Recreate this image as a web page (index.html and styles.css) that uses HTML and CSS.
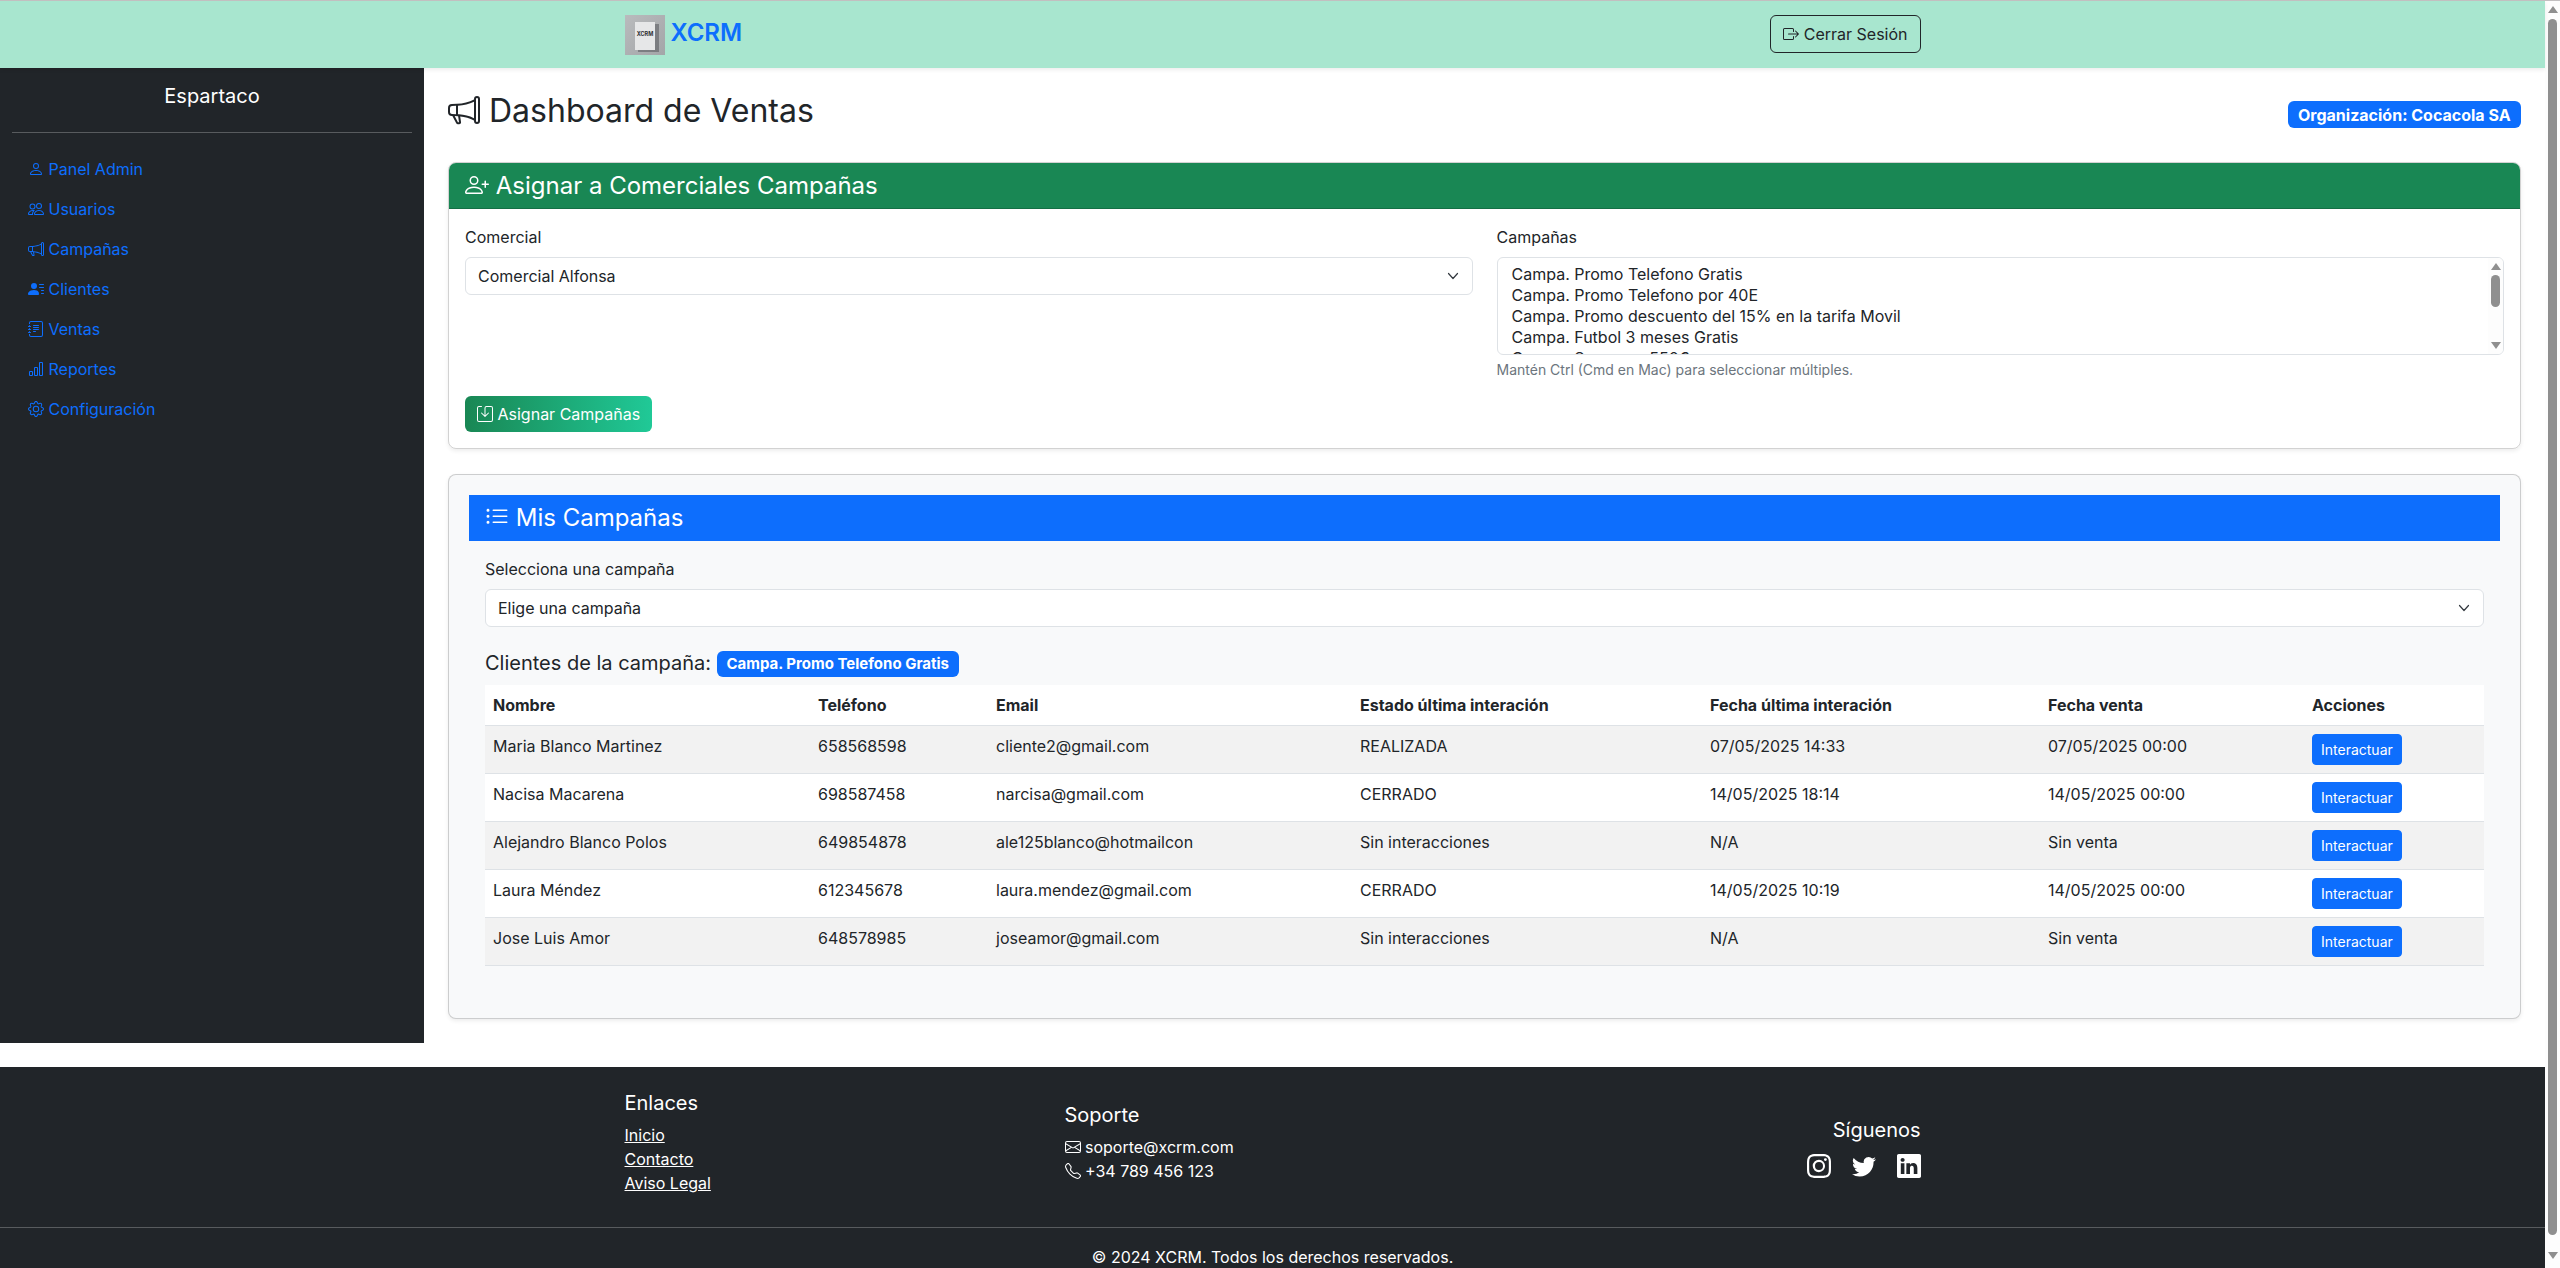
FILE: index.html
```html
<!DOCTYPE html>
<html lang="es">
<head>
    <meta charset="UTF-8">
    <meta name="viewport" content="width=device-width, initial-scale=1.0">
    <title>XCRM - Dashboard de Ventas</title>
    <link rel="stylesheet" href="styles.css">
</head>
<body>
    <svg class="icon-defs" xmlns="http://www.w3.org/2000/svg">
        <symbol id="i-person" viewBox="0 0 16 16"><path d="M8 8a3 3 0 1 0 0-6 3 3 0 0 0 0 6Zm2-3a2 2 0 1 1-4 0 2 2 0 0 1 4 0Zm4 8c0 1-1 1-1 1H3s-1 0-1-1 1-4 6-4 6 3 6 4Zm-1-.004c-.001-.246-.154-.986-.832-1.664C11.516 10.68 10.289 10 8 10c-2.29 0-3.516.68-4.168 1.332-.678.678-.83 1.418-.832 1.664h10Z"/></symbol>
        <symbol id="i-people" viewBox="0 0 16 16"><path d="M15 14s1 0 1-1-1-4-5-4-5 3-5 4 1 1 1 1h8Zm-7.978-1A.261.261 0 0 1 7 12.996c.001-.264.167-1.03.76-1.72C8.312 10.629 9.282 10 11 10c1.717 0 2.687.63 3.24 1.276.593.69.758 1.457.76 1.72l-.008.002a.274.274 0 0 1-.014.002H7.022ZM11 7a2 2 0 1 0 0-4 2 2 0 0 0 0 4Zm3-2a3 3 0 1 1-6 0 3 3 0 0 1 6 0ZM6.936 9.28a5.88 5.88 0 0 0-1.23-.247A7.35 7.35 0 0 0 5 9c-4 0-5 3-5 4 0 .667.333 1 1 1h4.216A2.238 2.238 0 0 1 5 13c0-1.01.377-2.042 1.09-2.904.243-.294.526-.569.846-.816ZM4.92 10A5.493 5.493 0 0 0 4 13H1c0-.26.164-1.03.76-1.724.545-.636 1.492-1.256 3.16-1.275ZM1.5 5.5a3 3 0 1 1 6 0 3 3 0 0 1-6 0Zm3-2a2 2 0 1 0 0 4 2 2 0 0 0 0-4Z"/></symbol>
        <symbol id="i-megaphone" viewBox="0 0 16 16"><path d="M13 2.5a1.5 1.5 0 0 1 3 0v11a1.5 1.5 0 0 1-3 0v-.214c-2.162-1.241-4.49-1.843-6.912-2.083l.405 2.712A1 1 0 0 1 5.51 15.1h-.548a1 1 0 0 1-.916-.599l-1.85-3.49a68.14 68.14 0 0 0-.202-.003A2.014 2.014 0 0 1 0 9V7a2.02 2.02 0 0 1 1.992-2.013 74.663 74.663 0 0 0 2.483-.075c3.043-.154 6.148-.849 8.525-2.199V2.5zm1 0v11a.5.5 0 0 0 1 0v-11a.5.5 0 0 0-1 0zm-1 1.35c-2.344 1.205-5.209 1.842-8 2.033v4.233c.18.01.359.022.537.036 2.568.189 5.093.744 7.463 1.993V3.85zm-9 6.215v-4.13a95.09 95.09 0 0 1-1.992.052A1.02 1.02 0 0 0 1 7v2c0 .55.448 1.002 1.006 1.009A60.49 60.49 0 0 1 4 10.065zm-.657.975 1.609 3.037.01.024h.548l-.002-.014-.443-2.966a68.019 68.019 0 0 0-1.722-.082z"/></symbol>
        <symbol id="i-person-lines" viewBox="0 0 16 16"><path d="M6 8a3 3 0 1 0 0-6 3 3 0 0 0 0 6zm-5 6s-1 0-1-1 1-4 6-4 5 3 5 4-1 1-1 1H1zM11 3.5a.5.5 0 0 1 .5-.5h4a.5.5 0 0 1 0 1h-4a.5.5 0 0 1-.5-.5zm.5 2.5a.5.5 0 0 0 0 1h4a.5.5 0 0 0 0-1h-4zm2 3a.5.5 0 0 0 0 1h2a.5.5 0 0 0 0-1h-2zm0 3a.5.5 0 0 0 0 1h2a.5.5 0 0 0 0-1h-2z"/></symbol>
        <symbol id="i-journal" viewBox="0 0 16 16"><path d="M5 10.5a.5.5 0 0 1 .5-.5h2a.5.5 0 0 1 0 1h-2a.5.5 0 0 1-.5-.5zm0-2a.5.5 0 0 1 .5-.5h5a.5.5 0 0 1 0 1h-5a.5.5 0 0 1-.5-.5zm0-2a.5.5 0 0 1 .5-.5h5a.5.5 0 0 1 0 1h-5a.5.5 0 0 1-.5-.5zm0-2a.5.5 0 0 1 .5-.5h5a.5.5 0 0 1 0 1h-5a.5.5 0 0 1-.5-.5z"/><path d="M3 0h10a2 2 0 0 1 2 2v12a2 2 0 0 1-2 2H3a2 2 0 0 1-2-2v-1h1v1a1 1 0 0 0 1 1h10a1 1 0 0 0 1-1V2a1 1 0 0 0-1-1H3a1 1 0 0 0-1 1v1H1V2a2 2 0 0 1 2-2z"/><path d="M1 5v-.5a.5.5 0 0 1 1 0V5h.5a.5.5 0 0 1 0 1h-2a.5.5 0 0 1 0-1H1zm0 3v-.5a.5.5 0 0 1 1 0V8h.5a.5.5 0 0 1 0 1h-2a.5.5 0 0 1 0-1H1zm0 3v-.5a.5.5 0 0 1 1 0v.5h.5a.5.5 0 0 1 0 1h-2a.5.5 0 0 1 0-1H1z"/></symbol>
        <symbol id="i-bar-chart" viewBox="0 0 16 16"><path d="M4 11H2v3h2v-3zm5-4H7v7h2V7zm5-5v12h-2V2h2zm-2-1a1 1 0 0 0-1 1v12a1 1 0 0 0 1 1h2a1 1 0 0 0 1-1V2a1 1 0 0 0-1-1h-2zM6 7a1 1 0 0 1 1-1h2a1 1 0 0 1 1 1v7a1 1 0 0 1-1 1H7a1 1 0 0 1-1-1V7zm-5 4a1 1 0 0 1 1-1h2a1 1 0 0 1 1 1v3a1 1 0 0 1-1 1H2a1 1 0 0 1-1-1v-3z"/></symbol>
        <symbol id="i-gear" viewBox="0 0 16 16"><path d="M8 4.754a3.246 3.246 0 1 0 0 6.492 3.246 3.246 0 0 0 0-6.492zM5.754 8a2.246 2.246 0 1 1 4.492 0 2.246 2.246 0 0 1-4.492 0z"/><path d="M9.796 1.343c-.527-1.79-3.065-1.79-3.592 0l-.094.319a.873.873 0 0 1-1.255.52l-.292-.16c-1.64-.892-3.433.902-2.54 2.541l.159.292a.873.873 0 0 1-.52 1.255l-.319.094c-1.79.527-1.79 3.065 0 3.592l.319.094a.873.873 0 0 1 .52 1.255l-.16.292c-.892 1.64.901 3.434 2.541 2.54l.292-.159a.873.873 0 0 1 1.255.52l.094.319c.527 1.79 3.065 1.79 3.592 0l.094-.319a.873.873 0 0 1 1.255-.52l.292.16c1.64.893 3.434-.902 2.54-2.541l-.159-.292a.873.873 0 0 1 .52-1.255l.319-.094c1.79-.527 1.79-3.065 0-3.592l-.319-.094a.873.873 0 0 1-.52-1.255l.16-.292c.893-1.64-.902-3.433-2.541-2.54l-.292.159a.873.873 0 0 1-1.255-.52l-.094-.319zm-2.633.283c.246-.835 1.428-.835 1.674 0l.094.319a1.873 1.873 0 0 0 2.693 1.115l.291-.16c.764-.415 1.6.42 1.184 1.185l-.159.292a1.873 1.873 0 0 0 1.116 2.692l.318.094c.835.246.835 1.428 0 1.674l-.319.094a1.873 1.873 0 0 0-1.115 2.693l.16.291c.415.764-.42 1.6-1.185 1.184l-.291-.159a1.873 1.873 0 0 0-2.693 1.116l-.094.318c-.246.835-1.428.835-1.674 0l-.094-.319a1.873 1.873 0 0 0-2.692-1.115l-.292.16c-.764.415-1.6-.42-1.184-1.185l.159-.291A1.873 1.873 0 0 0 1.945 8.93l-.319-.094c-.835-.246-.835-1.428 0-1.674l.319-.094A1.873 1.873 0 0 0 3.06 4.377l-.16-.292c-.415-.764.42-1.6 1.185-1.184l.292.159a1.873 1.873 0 0 0 2.692-1.115l.094-.319z"/></symbol>
        <symbol id="i-person-plus" viewBox="0 0 16 16"><path d="M6 8a3 3 0 1 0 0-6 3 3 0 0 0 0 6zm2-3a2 2 0 1 1-4 0 2 2 0 0 1 4 0zm4 8c0 1-1 1-1 1H1s-1 0-1-1 1-4 6-4 6 3 6 4zm-1-.004c-.001-.246-.154-.986-.832-1.664C9.516 10.68 8.289 10 6 10c-2.29 0-3.516.68-4.168 1.332-.678.678-.83 1.418-.832 1.664h10z"/><path d="M13.5 5a.5.5 0 0 1 .5.5V7h1.5a.5.5 0 0 1 0 1H14v1.5a.5.5 0 0 1-1 0V8h-1.5a.5.5 0 0 1 0-1H13V5.5a.5.5 0 0 1 .5-.5z"/></symbol>
        <symbol id="i-save" viewBox="0 0 16 16"><path d="M2 1a1 1 0 0 0-1 1v12a1 1 0 0 0 1 1h12a1 1 0 0 0 1-1V2a1 1 0 0 0-1-1H9.5a1 1 0 0 0-1 1v7.293l2.646-2.647a.5.5 0 0 1 .708.708l-3.5 3.5a.5.5 0 0 1-.708 0l-3.5-3.5a.5.5 0 1 1 .708-.708L7.5 9.293V2a2 2 0 0 1 2-2H14a2 2 0 0 1 2 2v12a2 2 0 0 1-2 2H2a2 2 0 0 1-2-2V2a2 2 0 0 1 2-2h2.5a.5.5 0 0 1 0 1H2z"/></symbol>
        <symbol id="i-list" viewBox="0 0 16 16"><path d="M5 11.5a.5.5 0 0 1 .5-.5h9a.5.5 0 0 1 0 1h-9a.5.5 0 0 1-.5-.5zm0-4a.5.5 0 0 1 .5-.5h9a.5.5 0 0 1 0 1h-9a.5.5 0 0 1-.5-.5zm0-4a.5.5 0 0 1 .5-.5h9a.5.5 0 0 1 0 1h-9a.5.5 0 0 1-.5-.5zm-3 1a1 1 0 1 0 0-2 1 1 0 0 0 0 2zm0 4a1 1 0 1 0 0-2 1 1 0 0 0 0 2zm0 4a1 1 0 1 0 0-2 1 1 0 0 0 0 2z"/></symbol>
        <symbol id="i-logout" viewBox="0 0 16 16"><path d="M10 12.5a.5.5 0 0 1-.5.5h-8a.5.5 0 0 1-.5-.5v-9a.5.5 0 0 1 .5-.5h8a.5.5 0 0 1 .5.5v2a.5.5 0 0 0 1 0v-2A1.5 1.5 0 0 0 9.5 2h-8A1.5 1.5 0 0 0 0 3.5v9A1.5 1.5 0 0 0 1.5 14h8a1.5 1.5 0 0 0 1.5-1.5v-2a.5.5 0 0 0-1 0v2z"/><path d="M15.854 8.354a.5.5 0 0 0 0-.708l-3-3a.5.5 0 0 0-.708.708L14.293 7.5H5.5a.5.5 0 0 0 0 1h8.793l-2.147 2.146a.5.5 0 0 0 .708.708l3-3z"/></symbol>
        <symbol id="i-envelope" viewBox="0 0 16 16"><path d="M0 4a2 2 0 0 1 2-2h12a2 2 0 0 1 2 2v8a2 2 0 0 1-2 2H2a2 2 0 0 1-2-2V4Zm2-1a1 1 0 0 0-1 1v.217l7 4.2 7-4.2V4a1 1 0 0 0-1-1H2Zm13 2.383-4.708 2.825L15 11.105V5.383Zm-.034 6.876-5.64-3.471L8 9.583l-1.326-.795-5.64 3.47A1 1 0 0 0 2 13h12a1 1 0 0 0 .966-.741ZM1 11.105l4.708-2.897L1 5.383v5.722Z"/></symbol>
        <symbol id="i-phone" viewBox="0 0 16 16"><path d="M3.654 1.328a.678.678 0 0 0-1.015-.063L1.605 2.3c-.483.484-.661 1.169-.45 1.77a17.568 17.568 0 0 0 4.168 6.608 17.569 17.569 0 0 0 6.608 4.168c.601.211 1.286.033 1.77-.45l1.034-1.034a.678.678 0 0 0-.063-1.015l-2.307-1.794a.678.678 0 0 0-.58-.122l-2.19.547a1.745 1.745 0 0 1-1.657-.459L5.482 8.062a1.745 1.745 0 0 1-.46-1.657l.548-2.19a.678.678 0 0 0-.122-.58L3.654 1.328zM1.884.511a1.745 1.745 0 0 1 2.612.163L6.29 2.98c.329.423.445.974.315 1.494l-.547 2.19a.678.678 0 0 0 .178.643l2.457 2.457a.678.678 0 0 0 .644.178l2.189-.547a1.745 1.745 0 0 1 1.494.315l2.306 1.794c.829.645.905 1.87.163 2.611l-1.034 1.034c-.74.74-1.846 1.065-2.877.702a18.634 18.634 0 0 1-7.01-4.42 18.634 18.634 0 0 1-4.42-7.009c-.362-1.03-.037-2.137.703-2.877L1.885.511z"/></symbol>
        <symbol id="i-instagram" viewBox="0 0 16 16"><path d="M8 0C5.829 0 5.556.01 4.703.048 3.85.088 3.269.222 2.76.42a3.917 3.917 0 0 0-1.417.923A3.927 3.927 0 0 0 .42 2.76C.222 3.268.087 3.85.048 4.7.01 5.555 0 5.827 0 8.001c0 2.172.01 2.444.048 3.297.04.852.174 1.433.372 1.942.205.526.478.972.923 1.417.444.445.89.719 1.416.923.51.198 1.09.333 1.942.372C5.555 15.99 5.827 16 8 16s2.444-.01 3.298-.048c.851-.04 1.434-.174 1.943-.372a3.916 3.916 0 0 0 1.416-.923c.445-.445.718-.891.923-1.417.197-.509.332-1.09.372-1.942C15.99 10.445 16 10.173 16 8s-.01-2.445-.048-3.299c-.04-.851-.175-1.433-.372-1.941a3.926 3.926 0 0 0-.923-1.417A3.911 3.911 0 0 0 13.24.42c-.51-.198-1.092-.333-1.943-.372C10.443.01 10.172 0 7.998 0h.003zm-.717 1.442h.718c2.136 0 2.389.007 3.232.046.78.035 1.204.166 1.486.275.373.145.64.319.92.599.28.28.453.546.598.92.11.281.24.705.275 1.485.039.843.047 1.096.047 3.231s-.008 2.389-.047 3.232c-.035.78-.166 1.203-.275 1.485a2.47 2.47 0 0 1-.599.919c-.28.28-.546.453-.92.598-.28.11-.704.24-1.485.276-.843.038-1.096.047-3.232.047s-2.39-.009-3.233-.047c-.78-.036-1.203-.166-1.485-.276a2.478 2.478 0 0 1-.92-.598 2.48 2.48 0 0 1-.6-.92c-.109-.281-.24-.705-.275-1.485-.038-.843-.046-1.096-.046-3.233 0-2.136.008-2.388.046-3.231.036-.78.166-1.204.276-1.486.145-.373.319-.64.599-.92.28-.28.546-.453.92-.598.282-.11.705-.24 1.485-.276.738-.034 1.024-.044 2.515-.045v.002zm4.988 1.328a.96.96 0 1 0 0 1.92.96.96 0 0 0 0-1.92zm-4.27 1.122a4.109 4.109 0 1 0 0 8.217 4.109 4.109 0 0 0 0-8.217zm0 1.441a2.667 2.667 0 1 1 0 5.334 2.667 2.667 0 0 1 0-5.334z"/></symbol>
        <symbol id="i-twitter" viewBox="0 0 16 16"><path d="M5.026 15c6.038 0 9.341-5.003 9.341-9.334 0-.14 0-.282-.006-.422A6.685 6.685 0 0 0 16 3.542a6.658 6.658 0 0 1-1.889.518 3.301 3.301 0 0 0 1.447-1.817 6.533 6.533 0 0 1-2.087.793A3.286 3.286 0 0 0 7.875 6.03a9.325 9.325 0 0 1-6.767-3.429 3.289 3.289 0 0 0 1.018 4.382A3.323 3.323 0 0 1 .64 6.575v.045a3.288 3.288 0 0 0 2.632 3.218 3.203 3.203 0 0 1-.865.115 3.23 3.23 0 0 1-.614-.057 3.283 3.283 0 0 0 3.067 2.277A6.588 6.588 0 0 1 .78 13.58a6.32 6.32 0 0 1-.78-.045A9.344 9.344 0 0 0 5.026 15z"/></symbol>
        <symbol id="i-linkedin" viewBox="0 0 16 16"><path d="M0 1.146C0 .513.526 0 1.175 0h13.65C15.474 0 16 .513 16 1.146v13.708c0 .633-.526 1.146-1.175 1.146H1.175C.526 16 0 15.487 0 14.854V1.146zm4.943 12.248V6.169H2.542v7.225h2.401zm-1.2-8.212c.837 0 1.358-.554 1.358-1.248-.015-.709-.52-1.248-1.342-1.248-.822 0-1.359.54-1.359 1.248 0 .694.521 1.248 1.327 1.248h.016zm4.908 8.212V9.359c0-.216.016-.432.08-.586.173-.431.568-.878 1.232-.878.869 0 1.216.662 1.216 1.634v3.865h2.401V9.25c0-2.22-1.184-3.252-2.764-3.252-1.274 0-1.845.7-2.165 1.193v.025h-.016a5.54 5.54 0 0 1 .016-.025V6.169h-2.4c.03.678 0 7.225 0 7.225h2.4z"/></symbol>
        <symbol id="i-chevron" viewBox="0 0 16 16"><path fill="none" stroke="#343a40" stroke-linecap="round" stroke-linejoin="round" stroke-width="1.2" d="m3.5 5.5 4.5 5 4.5-5"/></symbol>
    </svg>

    <div class="page">
        <header class="topbar">
            <div class="container topbar-inner">
                <a class="brand" href="#">
                    <svg class="brand-logo" viewBox="0 0 40 40" xmlns="http://www.w3.org/2000/svg">
                        <defs>
                            <linearGradient id="logoBg" x1="0" y1="0" x2="1" y2="1">
                                <stop offset="0" stop-color="#b9bbbd"/>
                                <stop offset="1" stop-color="#a3a5a8"/>
                            </linearGradient>
                        </defs>
                        <rect width="40" height="40" fill="url(#logoBg)"/>
                        <rect x="13" y="9" width="21" height="28" fill="#55585c" opacity=".55"/>
                        <rect x="10" y="7" width="20" height="28" fill="#e6e7e8"/>
                        <text x="20" y="21" class="logo-text">XCRM</text>
                    </svg>
                    <span class="brand-name">XCRM</span>
                </a>
                <button class="btn-logout" type="button"><svg class="bi"><use href="#i-logout"/></svg> Cerrar Sesión</button>
            </div>
        </header>

        <div class="layout">
            <aside class="sidebar">
                <h5 class="sidebar-title">Espartaco</h5>
                <hr class="sidebar-rule">
                <nav class="side-nav">
                    <a href="#"><svg class="bi"><use href="#i-person"/></svg> Panel Admin</a>
                    <a href="#"><svg class="bi"><use href="#i-people"/></svg> Usuarios</a>
                    <a href="#"><svg class="bi"><use href="#i-megaphone"/></svg> Campañas</a>
                    <a href="#"><svg class="bi"><use href="#i-person-lines"/></svg> Clientes</a>
                    <a href="#"><svg class="bi"><use href="#i-journal"/></svg> Ventas</a>
                    <a href="#"><svg class="bi"><use href="#i-bar-chart"/></svg> Reportes</a>
                    <a href="#"><svg class="bi"><use href="#i-gear"/></svg> Configuración</a>
                </nav>
            </aside>

            <main class="content">
                <div class="page-head">
                    <h2 class="page-title"><svg class="bi"><use href="#i-megaphone"/></svg> Dashboard de Ventas</h2>
                    <span class="badge badge-org">Organización: Cocacola SA</span>
                </div>

                <section class="card card-assign">
                    <div class="card-header header-green">
                        <h4><svg class="bi"><use href="#i-person-plus"/></svg> Asignar a Comerciales Campañas</h4>
                    </div>
                    <form class="card-body">
                        <div class="form-grid">
                            <div>
                                <label for="comercial">Comercial</label>
                                <div class="select-wrap">
                                    <select id="comercial" class="form-select">
                                        <option>Comercial Alfonsa</option>
                                    </select>
                                    <svg class="select-arrow"><use href="#i-chevron"/></svg>
                                </div>
                            </div>
                            <div>
                                <label for="campanas">Campañas</label>
                                <div class="select-wrap">
                                    <select id="campanas" class="form-multi" multiple>
                                        <option>Campa. Promo Telefono Gratis</option>
                                        <option>Campa. Promo Telefono por 40E</option>
                                        <option>Campa. Promo descuento del 15% en la tarifa Movil</option>
                                        <option>Campa. Futbol 3 meses Gratis</option>
                                        <option>Campa. Samsung 550€</option>
                                    </select>
                                    <div class="list-scrollbar">
                                        <span class="arrow-up"></span>
                                        <span class="thumb"></span>
                                        <span class="arrow-down"></span>
                                    </div>
                                </div>
                                <div class="form-text">Mantén Ctrl (Cmd en Mac) para seleccionar múltiples.</div>
                            </div>
                        </div>
                        <button class="btn-assign" type="button"><svg class="bi"><use href="#i-save"/></svg> Asignar Campañas</button>
                    </form>
                </section>

                <section class="card card-campaigns">
                    <div class="card-header header-blue">
                        <h4><svg class="bi"><use href="#i-list"/></svg> Mis Campañas</h4>
                    </div>
                    <div class="campaigns-body">
                        <label for="campana">Selecciona una campaña</label>
                        <div class="select-wrap">
                            <select id="campana" class="form-select">
                                <option>Elige una campaña</option>
                            </select>
                            <svg class="select-arrow"><use href="#i-chevron"/></svg>
                        </div>
                        <h5 class="clients-title">Clientes de la campaña: <span class="badge badge-campaign">Campa. Promo Telefono Gratis</span></h5>
                        <table class="clients-table">
                            <colgroup>
                                <col class="col-name">
                                <col class="col-phone">
                                <col class="col-email">
                                <col class="col-state">
                                <col class="col-date">
                                <col class="col-sale">
                                <col class="col-action">
                            </colgroup>
                            <thead>
                                <tr>
                                    <th>Nombre</th>
                                    <th>Teléfono</th>
                                    <th>Email</th>
                                    <th>Estado última interación</th>
                                    <th>Fecha última interación</th>
                                    <th>Fecha venta</th>
                                    <th>Acciones</th>
                                </tr>
                            </thead>
                            <tbody>
                                <tr>
                                    <td>Maria Blanco Martinez</td>
                                    <td>658568598</td>
                                    <td>cliente2@gmail.com</td>
                                    <td>REALIZADA</td>
                                    <td>07/05/2025 14:33</td>
                                    <td>07/05/2025 00:00</td>
                                    <td><button class="btn-small" type="button">Interactuar</button></td>
                                </tr>
                                <tr>
                                    <td>Nacisa Macarena</td>
                                    <td>698587458</td>
                                    <td>narcisa@gmail.com</td>
                                    <td>CERRADO</td>
                                    <td>14/05/2025 18:14</td>
                                    <td>14/05/2025 00:00</td>
                                    <td><button class="btn-small" type="button">Interactuar</button></td>
                                </tr>
                                <tr>
                                    <td>Alejandro Blanco Polos</td>
                                    <td>649854878</td>
                                    <td>ale125blanco@hotmailcon</td>
                                    <td>Sin interacciones</td>
                                    <td>N/A</td>
                                    <td>Sin venta</td>
                                    <td><button class="btn-small" type="button">Interactuar</button></td>
                                </tr>
                                <tr>
                                    <td>Laura Méndez</td>
                                    <td>612345678</td>
                                    <td>laura.mendez@gmail.com</td>
                                    <td>CERRADO</td>
                                    <td>14/05/2025 10:19</td>
                                    <td>14/05/2025 00:00</td>
                                    <td><button class="btn-small" type="button">Interactuar</button></td>
                                </tr>
                                <tr>
                                    <td>Jose Luis Amor</td>
                                    <td>648578985</td>
                                    <td>joseamor@gmail.com</td>
                                    <td>Sin interacciones</td>
                                    <td>N/A</td>
                                    <td>Sin venta</td>
                                    <td><button class="btn-small" type="button">Interactuar</button></td>
                                </tr>
                            </tbody>
                        </table>
                    </div>
                </section>
            </main>
        </div>

        <footer class="footer">
            <div class="container footer-cols">
                <div class="footer-col">
                    <h5>Enlaces</h5>
                    <ul class="footer-links">
                        <li><a href="#">Inicio</a></li>
                        <li><a href="#">Contacto</a></li>
                        <li><a href="#">Aviso Legal</a></li>
                    </ul>
                </div>
                <div class="footer-col">
                    <h5>Soporte</h5>
                    <p class="footer-contact"><svg class="bi"><use href="#i-envelope"/></svg> soporte@xcrm.com</p>
                    <p class="footer-contact"><svg class="bi"><use href="#i-phone"/></svg> +34 789 456 123</p>
                </div>
                <div class="footer-col footer-social">
                    <h5>Síguenos</h5>
                    <div class="social-icons">
                        <a href="#"><svg class="bi"><use href="#i-instagram"/></svg></a>
                        <a href="#"><svg class="bi"><use href="#i-twitter"/></svg></a>
                        <a href="#"><svg class="bi"><use href="#i-linkedin"/></svg></a>
                    </div>
                </div>
            </div>
            <hr class="footer-rule">
            <p class="copyright">© 2024 XCRM. Todos los derechos reservados.</p>
        </footer>
    </div>

    <div class="page-scrollbar">
        <span class="arrow-up"></span>
        <span class="thumb"></span>
        <span class="arrow-down"></span>
    </div>
</body>
</html>
```

FILE: styles.css
```css
* {
    box-sizing: border-box;
}
html, body {
    height: 100%;
}
body {
    margin: 0;
    display: flex;
    overflow: hidden;
    font-family: Inter, "Liberation Sans", sans-serif;
    font-size: 16px;
    line-height: 1.5;
    color: #212529;
    background-color: #fff;
    border-top: 1px solid #c2bfc0;
}
h2, h4, h5, p {
    margin: 0;
    font-weight: 400;
    line-height: 1.2;
}
a {
    color: #0d6efd;
}
.icon-defs {
    display: none;
}
.bi {
    display: inline-block;
    width: 1em;
    height: 1em;
    fill: currentColor;
    vertical-align: -.125em;
}
.page {
    flex: 1;
    min-width: 0;
}
.container {
    width: 1320px;
    margin: 0 auto;
    padding: 0 12px;
}

/* topbar */
.topbar {
    position: relative;
    height: 67px;
    background-color: #a8e6cf;
    box-shadow: 0 2px 4px rgba(0, 0, 0, 0.075);
}
.topbar-inner {
    display: flex;
    justify-content: space-between;
    padding-top: 14px;
}
.brand {
    display: flex;
    text-decoration: none;
}
.brand-logo {
    width: 40px;
    height: 40px;
    margin-right: 6px;
}
.logo-text {
    font-family: Inter, sans-serif;
    font-size: 5.5px;
    font-weight: 700;
    fill: #2c2f33;
    text-anchor: middle;
}
.brand-name {
    font-size: 24px;
    font-weight: 600;
    line-height: 29px;
    margin-top: 3px;
    color: #0d6efd;
}
.btn-logout {
    height: 38px;
    padding: 0 12px;
    font: inherit;
    color: #212529;
    background: transparent;
    border: 1px solid #212529;
    border-radius: 6px;
}

/* layout */
.layout {
    display: flex;
}
.sidebar {
    flex: 0 0 424px;
    padding: 16px 12px;
    color: #fff;
    background-color: #212529;
}
.sidebar-title {
    font-size: 20px;
    line-height: 24px;
    text-align: center;
}
.sidebar-rule {
    margin: 24px 0 16px;
    border: 0;
    border-top: 1px solid rgba(255, 255, 255, 0.25);
}
.side-nav a {
    display: block;
    padding: 8px 16px;
    text-decoration: none;
}
.content {
    flex: 1;
    min-width: 0;
    padding: 24px;
}
.page-head {
    display: flex;
    justify-content: space-between;
    align-items: flex-start;
    margin-bottom: 32px;
}
.page-title {
    font-size: 32px;
    line-height: 38px;
}
.badge {
    display: inline-block;
    font-weight: 700;
    line-height: 1;
    color: #fff;
    background-color: #0d6efd;
    border-radius: 6px;
    white-space: nowrap;
}
.badge-org {
    margin-top: 9px;
    padding: 5.6px 10.4px;
    font-size: 16px;
}
.badge-campaign {
    padding: 5.25px 9.75px;
    font-size: 15px;
    vertical-align: 1px;
}

/* cards */
.card {
    border: 1px solid rgba(0, 0, 0, 0.175);
    border-radius: 8px;
    box-shadow: 0 2px 4px rgba(0, 0, 0, 0.075);
}
.card-header h4 {
    font-size: 24px;
    line-height: 29px;
}
.card-header {
    padding: 8px 16px;
    color: #fff;
}
.header-green {
    background-color: #198754;
    border-bottom: 1px solid rgba(0, 0, 0, 0.175);
    border-radius: 7px 7px 0 0;
}
.header-blue {
    height: 46px;
    background-color: #0d6efd;
}
.card-assign {
    margin-bottom: 25px;
}
.card-body {
    padding: 16px;
}
.form-grid {
    display: grid;
    grid-template-columns: 1fr 1fr;
    gap: 24px;
    margin-bottom: 16px;
}
label {
    display: block;
    margin-bottom: 8px;
}
.select-wrap {
    position: relative;
}
.select-arrow {
    position: absolute;
    top: 11px;
    right: 12px;
    width: 16px;
    height: 16px;
    pointer-events: none;
}
.form-select {
    display: block;
    width: 100%;
    height: 38px;
    padding: 6px 36px 6px 12px;
    font: inherit;
    color: #212529;
    background-color: #fff;
    border: 1px solid #dee2e6;
    border-radius: 6px;
    appearance: none;
}
.form-multi {
    display: block;
    width: 100%;
    height: 98px;
    padding: 6px 12px;
    font: inherit;
    color: #212529;
    background-color: #fff;
    border: 1px solid #dee2e6;
    border-radius: 6px;
    overflow: hidden;
}
.form-text {
    margin-top: 4px;
    font-size: 14px;
    color: #6c757d;
}
.btn-assign {
    display: block;
    height: 36px;
    padding: 0 12px;
    font: inherit;
    color: #fff;
    background: linear-gradient(90deg, #198754, #20c997);
    border: 0;
    border-radius: 6px;
}
.card-campaigns {
    padding: 20px;
    background-color: #f8f9fa;
}
.campaigns-body {
    padding: 16px 16px 32px;
}
.clients-title {
    margin: 24px 0 8px;
    font-size: 20px;
    line-height: 24px;
}

/* table */
.clients-table {
    width: 100%;
    table-layout: fixed;
    border-collapse: collapse;
    background-color: #fff;
}
.clients-table th,
.clients-table td {
    padding: 8px;
    text-align: left;
    vertical-align: top;
    border-bottom: 1px solid #dee2e6;
}
.clients-table th {
    font-weight: 700;
}
.clients-table tbody tr:nth-child(odd) {
    background-color: #f2f2f2;
}
.col-name { width: 325px; }
.col-phone { width: 178px; }
.col-email { width: 364px; }
.col-state { width: 350px; }
.col-date { width: 338px; }
.col-sale { width: 264px; }
.col-action { width: 180px; }
.btn-small {
    display: block;
    height: 31px;
    padding: 0 8px;
    font: inherit;
    font-size: 14px;
    color: #fff;
    background-color: #0d6efd;
    border: 1px solid #0d6efd;
    border-radius: 4px;
}

/* footer */
.footer {
    margin-top: 24px;
    padding-top: 24px;
    color: #fff;
    background-color: #212529;
}
.footer h5 {
    margin-bottom: 8px;
    font-size: 20px;
    line-height: 24px;
}
.footer-cols {
    display: grid;
    grid-template-columns: repeat(3, 1fr);
    column-gap: 24px;
    align-items: center;
}
.footer-links {
    margin: 0;
    padding: 0;
    list-style: none;
}
.footer-links a {
    color: #fff;
}
.footer-contact {
    line-height: 24px;
}
.footer-social {
    padding-top: 10px;
    text-align: right;
}
.footer-social h5 {
    margin-bottom: 12px;
}
.social-icons {
    display: flex;
    justify-content: flex-end;
    gap: 21px;
}
.social-icons a {
    display: block;
    height: 24px;
    color: #fff;
}
.social-icons .bi {
    display: block;
    width: 24px;
    height: 24px;
}
.footer-rule {
    margin: 32px 0 17px;
    border: 0;
    border-top: 1px solid rgba(255, 255, 255, 0.25);
}
.copyright {
    line-height: 24px;
    text-align: center;
}

/* scrollbars */
.page-scrollbar,
.list-scrollbar {
    display: flex;
    flex-direction: column;
    align-items: center;
    justify-content: space-between;
    background-color: #fdfdfd;
}
.page-scrollbar {
    flex: 0 0 15px;
    padding: 5px 0 9px;
}
.list-scrollbar {
    position: absolute;
    top: 1px;
    right: 1px;
    bottom: 1px;
    width: 15px;
    padding: 5px 0;
    border-radius: 0 5px 5px 0;
}
.arrow-up,
.arrow-down {
    flex: none;
    width: 0;
    height: 0;
    border-left: 5px solid transparent;
    border-right: 5px solid transparent;
}
.arrow-up {
    border-bottom: 7px solid #8f8f8f;
}
.arrow-down {
    border-top: 7px solid #8f8f8f;
}
.thumb {
    flex: none;
    width: 9px;
    background-color: #8f8f8f;
    border-radius: 5px;
}
.page-scrollbar .thumb {
    height: 1216px;
    margin: 6px 0 auto;
}
.list-scrollbar .thumb {
    height: 32px;
    margin: 5px 0 auto;
}
```
